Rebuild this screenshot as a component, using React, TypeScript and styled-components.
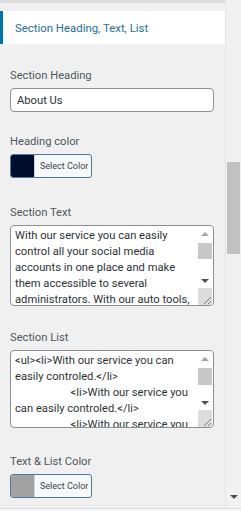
import React from "react";
import styled, { createGlobalStyle } from "styled-components";

const Global = createGlobalStyle`
  html, body { margin: 0; padding: 0; background: #f0f0f1; }
  body { font-family: Roboto, "Open Sans", sans-serif; overflow: hidden; }
  * { box-sizing: border-box; }
`;

const Frame = styled.div`
  width: 241px;
  height: 511px;
  display: flex;
  flex-direction: column;
  background: #f0f0f1;
  overflow: hidden;
`;

const Main = styled.div`
  height: 508px;
  display: flex;
  flex-direction: row;
`;

const Panel = styled.div`
  width: 226px;
  display: flex;
  flex-direction: column;
  border-right: 1px solid #e4e4e6;
`;

const TopStrip = styled.div`
  height: 3px;
  background: #dcdcde;
`;

const SectionHeader = styled.div`
  margin-top: 8px;
  height: 33px;
  background: #fff;
  border-left: 3px solid #0073aa;
  display: flex;
  align-items: center;
  padding-left: 12px;
  font-size: 11.4px;
  color: #22709d;
`;

const Body = styled.div`
  padding: 0 11px 0 10px;
  display: flex;
  flex-direction: column;
`;

const Label = styled.div<{ $top: number }>`
  margin-top: ${(p) => p.$top}px;
  margin-bottom: 4px;
  font-size: 11.2px;
  line-height: 16px;
  color: #50575e;
`;

const TextInput = styled.input`
  width: 204px;
  height: 24px;
  border: 1px solid #8c8f94;
  border-radius: 4px;
  background: #fff;
  padding: 0 6px;
  font-family: inherit;
  font-size: 11.2px;
  color: #2c3338;
  outline: none;
`;

const ColorButton = styled.button`
  width: 82px;
  height: 24px;
  padding: 0;
  display: flex;
  align-items: stretch;
  border: 1px solid #4b7aa0;
  border-radius: 3px;
  background: #f6f8fa;
  overflow: hidden;
  font-family: inherit;
  cursor: pointer;
`;

const Swatch = styled.span<{ $color: string }>`
  width: 24px;
  background: ${(p) => p.$color};
  border-right: 1px solid #d0d3d6;
`;

const ButtonText = styled.span`
  flex: 1;
  display: flex;
  align-items: center;
  padding-left: 5px;
  font-size: 9px;
  white-space: nowrap;
  color: #3c434a;
`;

const AreaBox = styled.div<{ $h: number }>`
  width: 204px;
  height: ${(p) => p.$h}px;
  border: 1px solid #8c8f94;
  border-radius: 4px;
  background: #fff;
  display: flex;
  overflow: hidden;
`;

const Area = styled.textarea`
  flex: 1;
  min-width: 0;
  border: none;
  background: transparent;
  padding: 2px 4px;
  font-family: inherit;
  font-size: 11.2px;
  line-height: 16px;
  color: #2c3338;
  resize: none;
  outline: none;
  overflow: hidden;
`;

const Rail = styled.div`
  width: 14px;
  display: flex;
  flex-direction: column;
  align-items: stretch;
  background: #fff;
  margin-right: 1px;
`;

const ArrowCell = styled.div`
  height: 15px;
  display: flex;
  align-items: center;
  justify-content: center;
`;

const Arrow = styled.div<{ $up?: boolean }>`
  width: 0;
  height: 0;
  border-left: 4px solid transparent;
  border-right: 4px solid transparent;
  ${(p) =>
    p.$up
      ? "border-bottom: 4px solid #a3a3a3;"
      : "border-top: 4px solid #505050;"}
`;

const Track = styled.div`
  flex: 1;
  display: flex;
  flex-direction: column;
`;

const RailThumb = styled.div<{ $h: number }>`
  margin-top: 2px;
  height: ${(p) => p.$h}px;
  background: #c8c8c8;
`;

const Resizer = styled.div`
  height: 17px;
  background: #dcdcdc;
  display: flex;
  align-items: flex-end;
  justify-content: flex-end;
`;

const ScrollCol = styled.div`
  width: 15px;
  display: flex;
  flex-direction: column;
  align-items: center;
  background: #f1f1f1;
`;

const Thumb = styled.div`
  margin-top: 162px;
  width: 13px;
  height: 92px;
  background: #c1c1c1;
`;

const DownArrow = styled.div`
  margin-top: auto;
  margin-bottom: 9px;
  width: 0;
  height: 0;
  border-left: 4px solid transparent;
  border-right: 4px solid transparent;
  border-top: 4px solid #505050;
`;

const BottomBar = styled.div`
  height: 3px;
  border-top: 1px solid #dcdcde;
  background: #f6f7f7;
`;

const Grip = () => (
  <svg width="9" height="9" viewBox="0 0 9 9">
    <path d="M8 1 L1 8 M8 5 L5 8" stroke="#7d7d7d" strokeWidth="1" fill="none" />
  </svg>
);

const ScrollArea = ({ h, thumb, value }: { h: number; thumb: number; value: string }) => (
  <AreaBox $h={h}>
    <Area readOnly value={value} />
    <Rail>
      <ArrowCell>
        <Arrow $up />
      </ArrowCell>
      <Track>
        <RailThumb $h={thumb} />
      </Track>
      <ArrowCell>
        <Arrow />
      </ArrowCell>
      <Resizer>
        <Grip />
      </Resizer>
    </Rail>
  </AreaBox>
);

const textValue =
  "With our service you can easily control all your social media accounts in one place and make them accessible to several administrators. With our auto tools, you can schedule posts and track results.";

const indent = "                    ";
const listValue =
  "<ul><li>With our service you can easily controled.</li>\n" +
  indent +
  "<li>With our service you can easily controled.</li>\n" +
  indent +
  "<li>With our service you can easily controled.</li>\n" +
  indent +
  "<li>With our service you can easily controled.</li></ul>";

export default function App() {
  return (
    <>
      <Global />
      <Frame>
        <Main>
          <Panel>
            <TopStrip />
            <SectionHeader>Section Heading, Text, List</SectionHeader>
            <Body>
              <Label $top={24}>Section Heading</Label>
              <TextInput defaultValue="About Us" />
              <Label $top={22}>Heading color</Label>
              <ColorButton>
                <Swatch $color="#000c2b" />
                <ButtonText>Select Color</ButtonText>
              </ColorButton>
              <Label $top={27}>Section Text</Label>
              <ScrollArea h={81} thumb={16} value={textValue} />
              <Label $top={24}>Section List</Label>
              <ScrollArea h={78} thumb={17} value={listValue} />
              <Label $top={26}>Text &amp; List Color</Label>
              <ColorButton>
                <Swatch $color="#a2a2a2" />
                <ButtonText>Select Color</ButtonText>
              </ColorButton>
            </Body>
          </Panel>
          <ScrollCol>
            <Thumb />
            <DownArrow />
          </ScrollCol>
        </Main>
        <BottomBar />
      </Frame>
    </>
  );
}
